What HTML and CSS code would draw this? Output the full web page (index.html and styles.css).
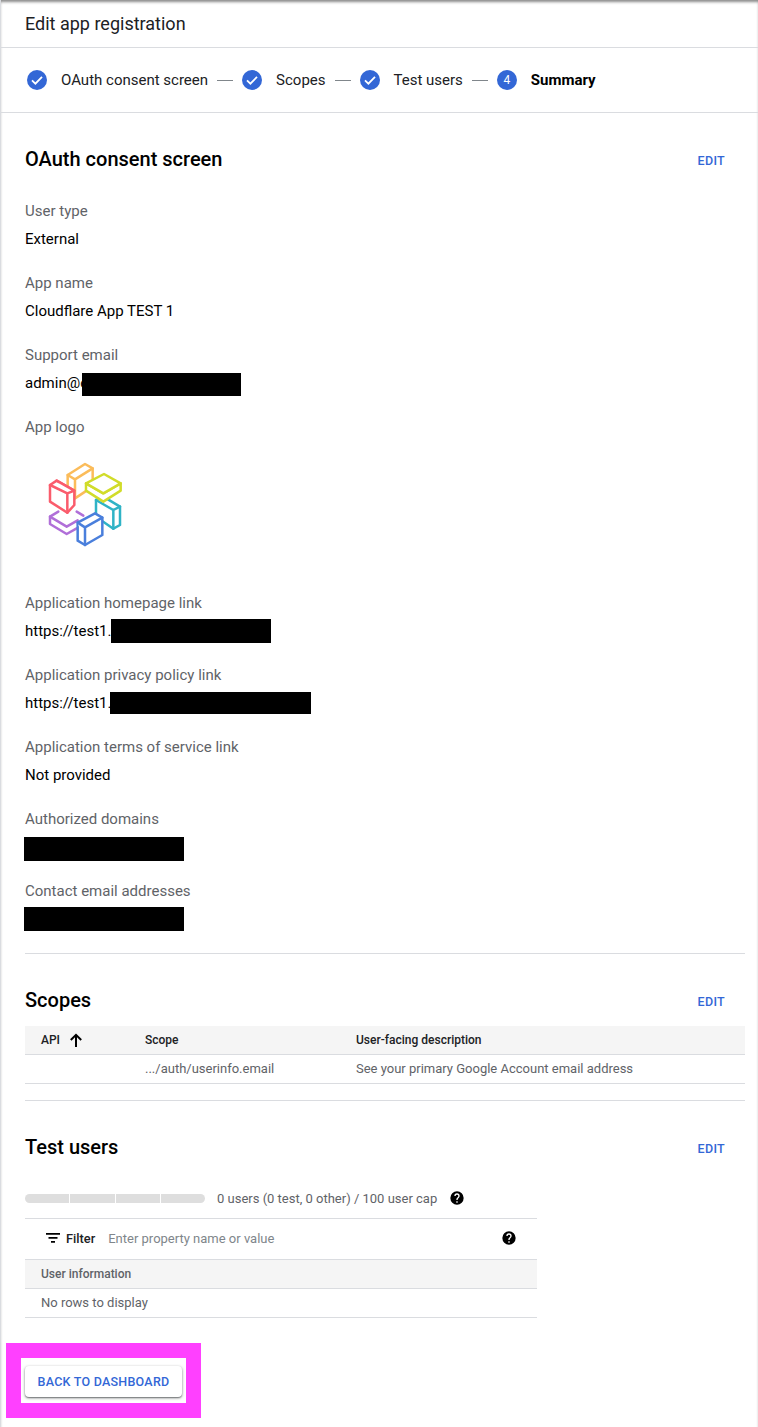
FILE: index.html
```html
<!DOCTYPE html>
<html lang="en">

<head>
    <meta charset="utf-8">
    <meta name="viewport" content="width=device-width, initial-scale=1.0">
    <title>Edit app registration</title>
    <link rel="stylesheet" href="styles.css">
</head>

<body>
    <div class="page">
        <h1 class="titel">Edit app registration</h1>

        <nav class="stepper">
            <div class="step">
                <svg class="step-icon" viewBox="0 0 20 20"><circle cx="10" cy="10" r="10" fill="#3367d6"/><path d="M5 10.4l3.4 3.3L15 6.9" fill="none" stroke="#fff" stroke-width="1.8"/></svg>
                <span>OAuth consent screen</span>
            </div>
            <span class="step-line"></span>
            <div class="step">
                <svg class="step-icon" viewBox="0 0 20 20"><circle cx="10" cy="10" r="10" fill="#3367d6"/><path d="M5 10.4l3.4 3.3L15 6.9" fill="none" stroke="#fff" stroke-width="1.8"/></svg>
                <span>Scopes</span>
            </div>
            <span class="step-line"></span>
            <div class="step">
                <svg class="step-icon" viewBox="0 0 20 20"><circle cx="10" cy="10" r="10" fill="#3367d6"/><path d="M5 10.4l3.4 3.3L15 6.9" fill="none" stroke="#fff" stroke-width="1.8"/></svg>
                <span>Test users</span>
            </div>
            <span class="step-line"></span>
            <div class="step step-aktiv">
                <span class="step-nummer">4</span>
                <span>Summary</span>
            </div>
        </nav>

        <section class="sektion sektion-oauth">
            <div class="sektion-top">
                <h2>OAuth consent screen</h2>
                <a class="edit">EDIT</a>
            </div>

            <div class="felt">
                <p class="label">User type</p>
                <div class="vaerdi">External</div>
            </div>
            <div class="felt">
                <p class="label">App name</p>
                <div class="vaerdi">Cloudflare App TEST 1</div>
            </div>
            <div class="felt">
                <p class="label">Support email</p>
                <div class="vaerdi">admin@c<span class="sort sort-email"></span></div>
            </div>
            <div class="felt felt-logo">
                <p class="label">App logo</p>
                <svg class="logo" viewBox="0 0 330 330" fill="none" stroke-width="7.5" stroke-linejoin="round" stroke-linecap="round">
                    <g stroke="#fbbc5a">
                        <path d="M113 120V75l52-33 23 13v55l-53 35"/>
                        <path d="M113 75l22 13v52M135 88l53-33"/>
                    </g>
                    <g stroke="#2fb3c6">
                        <path d="M198 150v50l52 36 20-11v-55l-50-30z"/>
                        <path d="M198 150l52 30v56M250 180l20-10"/>
                    </g>
                    <g stroke="#b06fd8">
                        <path d="M85 185l-25 15v22l50 30 30-17"/>
                        <path d="M60 200l50 30 33-19M140 185l20 12"/>
                    </g>
                    <g stroke="#d1dc2a" fill="#fff">
                        <path d="M168 100v22l52 33 52-33v-22l-52 30z"/>
                        <path d="M168 100l54-28 50 28-52 30z"/>
                    </g>
                    <g stroke="#fa5c6c" fill="#fff">
                        <path d="M60 105l20-13 53 30v43l-21 23-52-33z"/>
                        <path d="M60 105l52 25v58M80 92l53 30-21 8"/>
                    </g>
                    <g stroke="#4a7fdc" fill="#fff">
                        <path d="M143 218l52-28 22 13v52l-52 30-22-13z"/>
                        <path d="M143 218l22 14v53M165 232l52-29"/>
                    </g>
                </svg>
            </div>
            <div class="felt">
                <p class="label">Application homepage link</p>
                <div class="vaerdi">https://test1.<span class="sort sort-hjem"></span></div>
            </div>
            <div class="felt">
                <p class="label">Application privacy policy link</p>
                <div class="vaerdi">https://test1.<span class="sort sort-privat"></span></div>
            </div>
            <div class="felt">
                <p class="label">Application terms of service link</p>
                <div class="vaerdi">Not provided</div>
            </div>
            <div class="felt">
                <p class="label">Authorized domains</p>
                <div class="vaerdi"><span class="sort sort-domain"></span></div>
            </div>
            <div class="felt">
                <p class="label">Contact email addresses</p>
                <div class="vaerdi"><span class="sort sort-kontakt"></span></div>
            </div>
        </section>

        <section class="sektion sektion-scopes">
            <div class="sektion-top">
                <h2>Scopes</h2>
                <a class="edit">EDIT</a>
            </div>
            <div class="tabel">
                <div class="raekke raekke-head">
                    <div class="kol-api">API
                        <svg class="pil" viewBox="0 0 14 14"><path d="M7 14V2M1.8 7L7 1.8 12.2 7" fill="none" stroke="#000" stroke-width="2"/></svg>
                    </div>
                    <div class="kol-scope">Scope</div>
                    <div>User-facing description</div>
                </div>
                <div class="raekke">
                    <div class="kol-api"></div>
                    <div class="kol-scope">.../auth/userinfo.email</div>
                    <div>See your primary Google Account email address</div>
                </div>
            </div>
        </section>

        <section class="sektion sektion-test">
            <div class="sektion-top">
                <h2>Test users</h2>
                <a class="edit">EDIT</a>
            </div>
            <div class="kvote">
                <div class="bar"><span></span><span></span><span></span><span></span></div>
                <span class="kvote-tekst">0 users (0 test, 0 other) / 100 user cap</span>
                <svg class="hjaelp" viewBox="0 0 24 24"><path d="M12 2a10 10 0 100 20 10 10 0 000-20zm1 17h-2v-2h2v2zm2.1-7.7l-.9.9c-.7.7-1.2 1.3-1.2 2.8h-2v-.5c0-1.1.5-2.1 1.2-2.8l1.2-1.3c.4-.3.6-.8.6-1.4a2 2 0 00-4 0H8a4 4 0 018 0c0 .9-.4 1.7-.9 2.3z"/></svg>
            </div>
            <div class="brugere">
                <div class="filter">
                    <svg class="filter-ikon" viewBox="0 0 14 10"><path d="M0 0h14v1.7H0zM2.5 4h9v1.7h-9zM5 8h4v1.7H5z"/></svg>
                    <span class="filter-navn">Filter</span>
                    <span class="filter-input">Enter property name or value</span>
                    <svg class="hjaelp" viewBox="0 0 24 24"><path d="M12 2a10 10 0 100 20 10 10 0 000-20zm1 17h-2v-2h2v2zm2.1-7.7l-.9.9c-.7.7-1.2 1.3-1.2 2.8h-2v-.5c0-1.1.5-2.1 1.2-2.8l1.2-1.3c.4-.3.6-.8.6-1.4a2 2 0 00-4 0H8a4 4 0 018 0c0 .9-.4 1.7-.9 2.3z"/></svg>
                </div>
                <div class="brugere-head">User information</div>
                <div class="brugere-tom">No rows to display</div>
            </div>
        </section>

        <div class="knap-ramme">
            <button class="knap">BACK TO DASHBOARD</button>
        </div>
    </div>
</body>

</html>
```

FILE: styles.css
```css
* {
    box-sizing: border-box;
}

html,
body {
    margin: 0;
    background-color: #fff;
}

body {
    font-family: Roboto, "Liberation Sans", sans-serif;
    color: #202124;
    height: 1427px;
    overflow: hidden;
}

.page {
    height: 1427px;
    border-left: 1px solid #dadce0;
    box-shadow: inset 0 3px 3px -1px #8a8a8a;
}

h1,
h2,
p {
    margin: 0;
}

.titel {
    height: 48px;
    padding: 13px 24px 0;
    font-size: 18px;
    line-height: 22px;
    font-weight: 400;
    border-bottom: 1px solid #dadce0;
}

.stepper {
    display: flex;
    align-items: center;
    height: 65px;
    padding-left: 26px;
    border-bottom: 1px solid #dadce0;
    font-size: 15px;
}

.step {
    display: flex;
    align-items: center;
    gap: 14px;
}

.step-icon {
    width: 20px;
    height: 20px;
}

.step-nummer {
    width: 20px;
    height: 20px;
    border-radius: 50%;
    background-color: #3367d6;
    color: #fff;
    font-size: 12px;
    line-height: 20px;
    text-align: center;
}

.step-aktiv {
    font-weight: 700;
    color: #000;
}

.step-aktiv .step-nummer {
    font-weight: 400;
}

.step-line {
    width: 16px;
    height: 1px;
    margin: 0 9px;
    background-color: #80868b;
}

.sektion {
    padding-left: 24px;
    padding-right: 13px;
}

.sektion-oauth {
    padding-top: 34px;
    height: 840px;
}

.sektion-top {
    display: flex;
    justify-content: space-between;
    align-items: center;
    height: 24px;
    padding-right: 20px;
}

h2 {
    font-size: 20px;
    line-height: 24px;
    font-weight: 500;
    color: #000;
}

.edit {
    padding-top: 2px;
    color: #3367d6;
    font-size: 12.5px;
    font-weight: 500;
    letter-spacing: .3px;
}

.sektion-oauth .sektion-top {
    margin-bottom: 29px;
}

.felt {
    margin-bottom: 24px;
}

.felt-logo {
    height: 152px;
}

.label {
    padding-top: 1px;
    color: #5f6368;
    font-size: 15px;
    line-height: 20px;
    margin-bottom: 7px;
}

.vaerdi {
    display: flex;
    height: 20px;
    line-height: 22px;
    font-size: 15px;
    color: #000;
}

/* sorte bokse over skjulte data */
.sort {
    display: block;
    background-color: #000;
}

.sort-email {
    width: 159px;
    height: 23px;
    margin: 1px 0 0 -6px;
}

.sort-hjem {
    width: 160px;
    height: 24px;
    margin: -1px 0 0 -1px;
}

.sort-privat {
    width: 201px;
    height: 22px;
    margin: 0 0 0 -2px;
}

.sort-domain {
    width: 160px;
    height: 24px;
    margin: 1px 0 0 -1px;
}

.sort-kontakt {
    width: 160px;
    height: 24px;
    margin: -1px 0 0 -1px;
}

.logo {
    display: block;
    width: 110px;
    height: 110px;
    margin: 13px 0 0 5px;
}

.sektion-scopes {
    height: 147px;
    padding-top: 34px;
    border-top: 1px solid #dadce0;
    margin-left: 24px;
    padding-left: 0;
    margin-right: 13px;
    padding-right: 0;
}

.tabel {
    margin-top: 14px;
    border-bottom: 1px solid #dadce0;
    font-size: 13px;
}

.raekke {
    display: flex;
    align-items: center;
    height: 28px;
    padding-bottom: 1px;
    color: #5f6368;
}

.raekke-head {
    height: 29px;
    background-color: #f5f5f5;
    border-bottom: 1px solid #dadce0;
    color: #202124;
    font-size: 12px;
    font-weight: 500;
}

.kol-api {
    display: flex;
    align-items: center;
    gap: 9px;
    width: 120px;
    padding-left: 16px;
}

.kol-scope {
    width: 211px;
}

.pil {
    width: 14px;
    height: 14px;
}

.sektion-test {
    height: 243px;
    padding-top: 34px;
    border-top: 1px solid #dadce0;
    margin-left: 24px;
    padding-left: 0;
    margin-right: 13px;
    padding-right: 0;
}

.kvote {
    display: flex;
    align-items: center;
    height: 20px;
    margin-top: 29px;
    font-size: 13px;
    color: #5f6368;
}

.bar {
    display: flex;
    gap: 1px;
    width: 180px;
    height: 9px;
    border-radius: 5px;
    overflow: hidden;
    margin-right: 12px;
}

.bar span {
    flex: 1;
    background-color: #dedede;
}

.hjaelp {
    width: 16px;
    height: 16px;
    margin-left: 12px;
}

.brugere {
    width: 512px;
    margin-top: 10px;
    font-size: 13px;
    border-top: 1px solid #dadce0;
}

.filter {
    display: flex;
    align-items: center;
    height: 41px;
    padding-left: 21px;
    padding-right: 20px;
    padding-bottom: 2px;
    border-bottom: 1px solid #dadce0;
}

.filter-ikon {
    width: 14px;
    height: 10px;
    margin-right: 6px;
}

.filter-navn {
    color: #202124;
    font-size: 12.8px;
    font-weight: 500;
    margin-right: 13px;
}

.filter-input {
    flex: 1;
    color: #80868b;
}

.brugere-head {
    height: 29px;
    line-height: 28px;
    padding-left: 16px;
    background-color: #f5f5f5;
    border-bottom: 1px solid #dadce0;
    color: #5f6368;
    font-weight: 500;
    font-size: 12px;
}

.brugere-tom {
    height: 29px;
    line-height: 28px;
    padding-left: 16px;
    border-bottom: 1px solid #dadce0;
    color: #5f6368;
}

.knap-ramme {
    width: 195px;
    height: 75px;
    margin: 0 0 0 5px;
    padding: 8px 4px 0;
    border: 15px solid #ff40ff;
    background-color: #fff;
}

.knap {
    display: block;
    width: 157px;
    height: 31px;
    margin: 0;
    padding: 0;
    border: 0;
    border-radius: 4px;
    background-color: #fff;
    color: #3367d6;
    font-family: Roboto, "Liberation Sans", sans-serif;
    font-size: 12.5px;
    font-weight: 500;
    letter-spacing: .25px;
    box-shadow: 0 1px 3px 0 rgba(60, 64, 67, .6), 0 1px 1px 0 rgba(60, 64, 67, .4);
}
```
